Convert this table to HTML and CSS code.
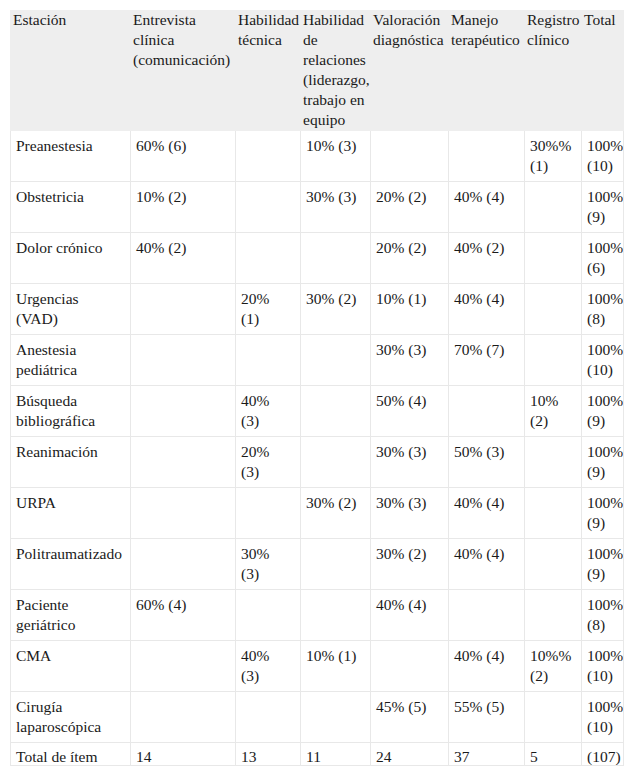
FILE: index.html
```html
<!DOCTYPE html>
<html lang="es">
<head>
<meta charset="utf-8">
<title>Estaciones</title>
<link rel="stylesheet" href="styles.css">
</head>
<body>
<div class="wrap">
<table class="grid">
  <colgroup>
    <col class="c1"><col class="c2"><col class="c3"><col class="c4"><col class="c5"><col class="c6"><col class="c7"><col class="c8">
  </colgroup>
  <thead>
    <tr>
      <th>Estación</th>
      <th>Entrevista<br>clínica<br>(comunicación)</th>
      <th>Habilidad<br>técnica</th>
      <th>Habilidad<br>de<br>relaciones<br>(liderazgo,<br>trabajo en<br>equipo</th>
      <th>Valoración<br>diagnóstica</th>
      <th>Manejo<br>terapéutico</th>
      <th>Registro<br>clínico</th>
      <th>Total</th>
    </tr>
  </thead>
  <tbody>
    <tr><td>Preanestesia</td><td>60% (6)</td><td></td><td>10% (3)</td><td></td><td></td><td>30%%<br>(1)</td><td>100%<br>(10)</td></tr>
    <tr><td>Obstetricia</td><td>10% (2)</td><td></td><td>30% (3)</td><td>20% (2)</td><td>40% (4)</td><td></td><td>100%<br>(9)</td></tr>
    <tr><td>Dolor crónico</td><td>40% (2)</td><td></td><td></td><td>20% (2)</td><td>40% (2)</td><td></td><td>100%<br>(6)</td></tr>
    <tr><td>Urgencias<br>(VAD)</td><td></td><td>20%<br>(1)</td><td>30% (2)</td><td>10% (1)</td><td>40% (4)</td><td></td><td>100%<br>(8)</td></tr>
    <tr><td>Anestesia<br>pediátrica</td><td></td><td></td><td></td><td>30% (3)</td><td>70% (7)</td><td></td><td>100%<br>(10)</td></tr>
    <tr><td>Búsqueda<br>bibliográfica</td><td></td><td>40%<br>(3)</td><td></td><td>50% (4)</td><td></td><td>10%<br>(2)</td><td>100%<br>(9)</td></tr>
    <tr><td>Reanimación</td><td></td><td>20%<br>(3)</td><td></td><td>30% (3)</td><td>50% (3)</td><td></td><td>100%<br>(9)</td></tr>
    <tr><td>URPA</td><td></td><td></td><td>30% (2)</td><td>30% (3)</td><td>40% (4)</td><td></td><td>100%<br>(9)</td></tr>
    <tr><td>Politraumatizado</td><td></td><td>30%<br>(3)</td><td></td><td>30% (2)</td><td>40% (4)</td><td></td><td>100%<br>(9)</td></tr>
    <tr><td>Paciente<br>geriátrico</td><td>60% (4)</td><td></td><td></td><td>40% (4)</td><td></td><td></td><td>100%<br>(8)</td></tr>
    <tr><td>CMA</td><td></td><td>40%<br>(3)</td><td>10% (1)</td><td></td><td>40% (4)</td><td>10%%<br>(2)</td><td>100%<br>(10)</td></tr>
    <tr><td>Cirugía<br>laparoscópica</td><td></td><td></td><td></td><td>45% (5)</td><td>55% (5)</td><td></td><td>100%<br>(10)</td></tr>
    <tr class="total"><td>Total de ítem</td><td>14</td><td>13</td><td>11</td><td>24</td><td>37</td><td>5</td><td>(107)</td></tr>
  </tbody>
</table>
</div>
</body>
</html>
```

FILE: styles.css
```css
html, body {
  margin: 0;
  padding: 0;
  background: #ffffff;
}

.wrap {
  padding: 10px 0 0 10px;
}

.grid {
  border-collapse: collapse;
  table-layout: fixed;
  width: 613px;
  font-family: "Liberation Serif", "Times New Roman", serif;
  font-size: 15.5px;
  line-height: 20px;
  color: #1a1a1a;
}

.c1 { width: 120px; }
.c2 { width: 105px; }
.c3 { width: 65px; }
.c4 { width: 70px; }
.c5 { width: 78px; }
.c6 { width: 76px; }
.c7 { width: 57px; }
.c8 { width: 42px; }

.grid th {
  background: #eeeeee;
  border: 1px solid #eeeeee;
  border-top: 0;
  font-weight: normal;
  text-align: left;
  vertical-align: top;
  padding: 0 1px 0 2px;
  white-space: nowrap;
  overflow: hidden;
}

.grid td {
  border: 1px solid #e8e8e8;
  vertical-align: top;
  text-align: left;
  padding: 5px 4px 5px 5px;
  white-space: nowrap;
  overflow: hidden;
}

.grid .total td {
  padding: 5px 4px 0 5px;
  line-height: 17px;
}
```
